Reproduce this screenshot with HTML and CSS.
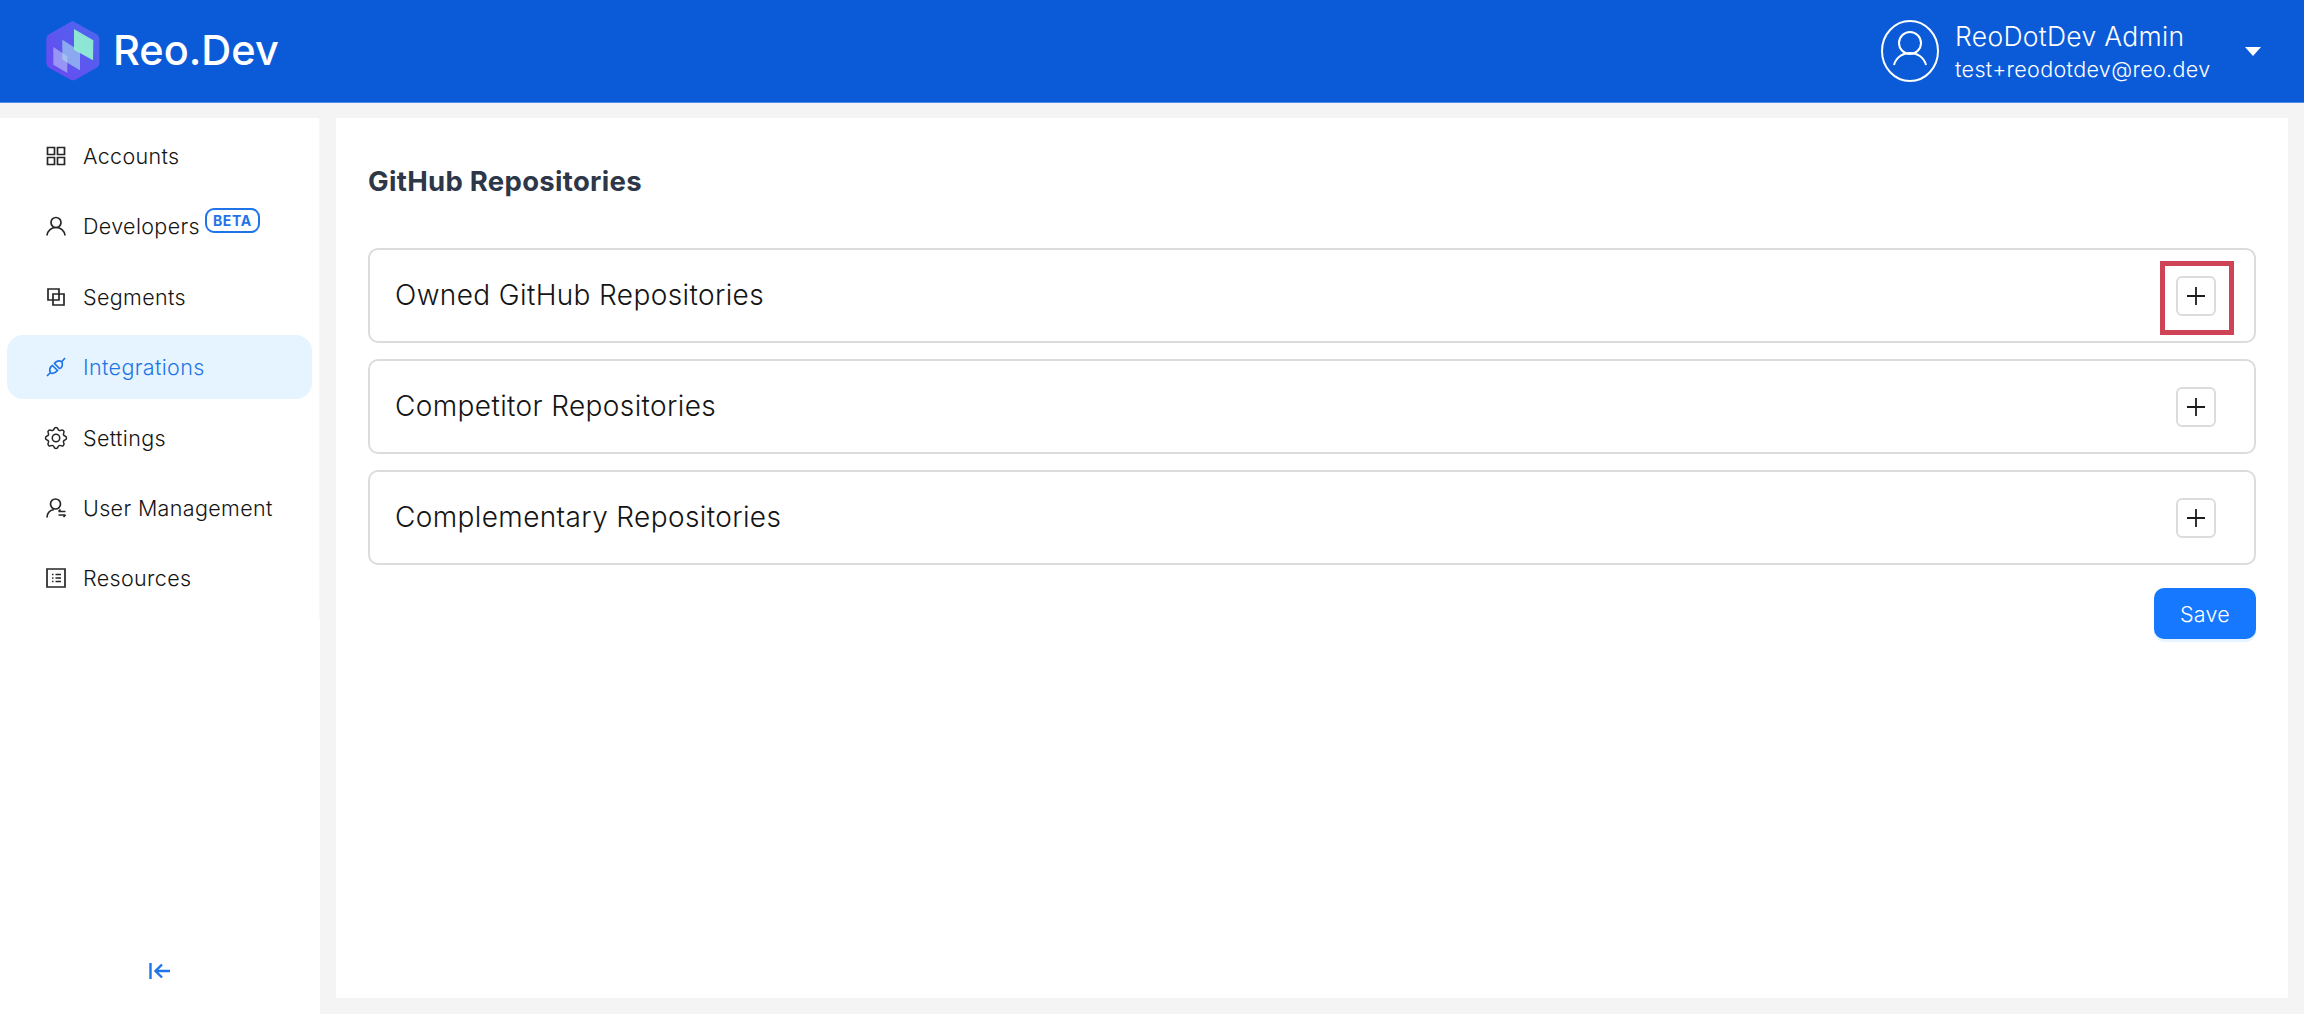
FILE: index.html
```html
<!DOCTYPE html>
<html lang="en">
<head>
<meta charset="utf-8">
<title>Reo.Dev - GitHub Repositories</title>
<link rel="stylesheet" href="styles.css">
</head>
<body>
<header class="topbar">
  <div class="brand">
    <svg class="brand-mark" viewBox="48 34 162 180" aria-hidden="true">
      <defs>
        <linearGradient id="hexfill" x1="0" y1="1" x2="1" y2="0">
          <stop offset="0" stop-color="#6c48f0"/>
          <stop offset="1" stop-color="#4a68ef"/>
        </linearGradient>
      </defs>
      <path d="M129 35 L200 74 Q208 79 208 88 L208 160 Q208 170 200 174 L136 210 Q129 214 122 210 L57 174 Q49 170 49 160 L49 88 Q49 79 57 74 L122 37 Q126 34 129 35Z" fill="url(#hexfill)"/>
      <path d="M70 112 L112 140 L112 190 L70 165Z" fill="#c4cdf8" opacity=".55"/>
      <path d="M97 90 L150 124 L150 182 L97 150Z" fill="#a9dcf0" opacity=".62"/>
      <path d="M132 58 L190 92 L189 152 L132 120Z" fill="#93f2d2" opacity=".92"/>
    </svg>
    <span class="brand-name">Reo.Dev</span>
  </div>
  <div class="account">
    <svg class="account-avatar" viewBox="0 0 58 62" aria-hidden="true">
      <ellipse cx="29" cy="31" rx="28" ry="30"/>
      <circle cx="29" cy="23" r="11"/>
      <path d="M13 45c2-8 9-12 16-12s14 4 16 12"/>
    </svg>
    <div class="account-text">
      <div class="account-name">ReoDotDev Admin</div>
      <div class="account-mail">test+reodotdev@reo.dev</div>
    </div>
    <span class="caret"></span>
  </div>
</header>

<div class="shell">
  <aside class="sidebar">
    <nav class="nav">
      <a class="nav-item">
        <svg class="nav-icon" viewBox="0 0 20 20"><path d="M1.5 1.5h7v7h-7zM11.500 1.500h7v7h-7zM1.500 11.500h7v7h-7zM11.500 11.500h7v7h-7z"/></svg>
        <span>Accounts</span>
      </a>
      <a class="nav-item">
        <svg class="nav-icon" viewBox="0 0 20 20"><circle cx="10" cy="6.500" r="5"/><path d="M1 19.500c.5-5 4.500-8 9-8s8.500 3 9 8"/></svg>
        <span>Developers</span>
        <span class="beta">BETA</span>
      </a>
      <a class="nav-item">
        <svg class="nav-icon" viewBox="0 0 20 20"><path d="M2 2h11v11H2z"/><path d="M7 7h11v11H7z"/></svg>
        <span>Segments</span>
      </a>
      <a class="nav-item nav-item-active">
        <svg class="nav-icon" viewBox="0 0 20 20"><path d="M8.500 6.500L13.500 11.500C16 11 17 8 16 5C13 3 10 4 8.500 6.500Z"/><path d="M6.500 8.500L11.500 13.500C9.500 16 7 16.800 4.500 16C3.200 13 4 10 6.500 8.500Z"/><path d="M16 4.500l3-3.500M4 16l-3 3"/></svg>
        <span>Integrations</span>
      </a>
      <a class="nav-item">
        <svg class="nav-icon nav-icon-gear" viewBox="0 0 24 24"><path d="M10.325 4.317c.426-1.756 2.924-1.756 3.350 0a1.724 1.724 0 0 0 2.573 1.066c1.543-.940 3.310.826 2.370 2.370a1.724 1.724 0 0 0 1.065 2.572c1.756.426 1.756 2.924 0 3.350a1.724 1.724 0 0 0-1.066 2.573c.940 1.543-.826 3.310-2.370 2.370a1.724 1.724 0 0 0-2.572 1.065c-.426 1.756-2.924 1.756-3.350 0a1.724 1.724 0 0 0-2.573-1.066c-1.543.940-3.310-.826-2.370-2.370a1.724 1.724 0 0 0-1.065-2.572c-1.756-.426-1.756-2.924 0-3.350a1.724 1.724 0 0 0 1.066-2.573c-.940-1.543.826-3.310 2.370-2.370 1 .608 2.296.070 2.572-1.065z"/><circle cx="12" cy="12" r="3.200"/></svg>
        <span>Settings</span>
      </a>
      <a class="nav-item">
        <svg class="nav-icon" viewBox="0 0 20 20"><circle cx="9.500" cy="6" r="5"/><path d="M1 19.500c.3-4.500 3-7.500 7-8"/><path d="M12.500 13.500h7M12.500 17h7M12.500 13.500l2-2M19.500 17l-2 2"/></svg>
        <span>User Management</span>
      </a>
      <a class="nav-item">
        <svg class="nav-icon" viewBox="0 0 20 20"><path d="M1 1h18v18H1z"/><path d="M6 6.500h1.500M6 10h1.500M6 13.500h1.500M9.500 6.500H15M9.500 10H15M9.500 13.500H15"/></svg>
        <span>Resources</span>
      </a>
    </nav>
    <button class="collapse" type="button" aria-label="Collapse sidebar">
      <svg viewBox="0 0 22 18"><path d="M1.500 1v16M21 9H7.500M13 2.500L6.500 9l6.500 6.500"/></svg>
    </button>
  </aside>

  <main class="content">
    <h1 class="page-title">GitHub Repositories</h1>
    <section class="repo-list">
      <div class="repo-card">
        <span class="repo-title">Owned GitHub Repositories</span>
        <span class="add-wrap">
          <button class="add-btn" type="button" aria-label="Add"><svg viewBox="0 0 18 18"><path d="M9 0v18M0 9h18"/></svg></button>
          <span class="highlight"></span>
        </span>
      </div>
      <div class="repo-card">
        <span class="repo-title">Competitor Repositories</span>
        <span class="add-wrap">
          <button class="add-btn" type="button" aria-label="Add"><svg viewBox="0 0 18 18"><path d="M9 0v18M0 9h18"/></svg></button>
        </span>
      </div>
      <div class="repo-card">
        <span class="repo-title">Complementary Repositories</span>
        <span class="add-wrap">
          <button class="add-btn" type="button" aria-label="Add"><svg viewBox="0 0 18 18"><path d="M9 0v18M0 9h18"/></svg></button>
        </span>
      </div>
    </section>
    <div class="actions">
      <button class="save" type="button">Save</button>
    </div>
  </main>
</div>
</body>
</html>
```
FILE: styles.css
```css
* { box-sizing: border-box; }
html, body { height: 100%; }
body {
  margin: 0;
  height: 1014px;
  overflow: hidden;
  display: flex;
  flex-direction: column;
  background: #f4f4f4;
  color: #141414;
  font-family: Inter, "Open Sans", sans-serif;
}
.topbar {
  flex: none;
  height: 103px;
  display: flex;
  align-items: center;
  justify-content: space-between;
  padding: 0 43px 0 46px;
  background: #0b5bd9;
  border-bottom: 1px solid #4d8be6;
  color: #fff;
}
.brand { display: flex; align-items: center; gap: 13px; }
.brand-mark { width: 54px; height: 60px; display: block; }
.brand-name { font-size: 41.500px; font-weight: 500; line-height: 1; }
.account { display: flex; align-items: center; }
.account-avatar { width: 58px; height: 62px; fill: none; stroke: #fff; stroke-width: 2; margin-right: 16px; }
.account-text { width: 290px; }
.account-name { font-size: 26.500px; font-weight: 300; line-height: 36px; letter-spacing: .3px; }
.account-mail { font-size: 21.500px; font-weight: 300; line-height: 30px; letter-spacing: .35px; }
.caret {
  width: 0; height: 0;
  border-left: 8px solid transparent;
  border-right: 8px solid transparent;
  border-top: 9px solid #fff;
}
.shell { flex: 1; min-height: 0; display: flex; padding-top: 15px; }
.sidebar {
  flex: none;
  width: 320px;
  background: #fff;
  display: flex;
  flex-direction: column;
}
.nav {
  display: flex;
  flex-direction: column;
  gap: 6.400px;
  height: 500px;
  padding: 6px 7px 0 7px;
  border-right: 1px solid #f7f7f7;
}
.nav-item {
  height: 64px;
  flex: none;
  display: flex;
  align-items: center;
  gap: 17px;
  padding-left: 39px;
  border-radius: 16px;
  font-size: 21.500px;
  font-weight: 300;
  letter-spacing: .35px;
}
.nav-item-active { background: #e6f4ff; color: #1f74e8; }
.nav-icon { width: 20px; height: 20px; flex: none; fill: none; stroke: currentColor; stroke-width: 1.700; color: #262626; }
.nav-icon-gear { width: 28px; height: 28px; margin: 0 -4px; stroke-width: 1.300; }
.nav-item-active .nav-icon { color: #1f74e8; }
.beta {
  margin: -12px 0 0 -12px;
  padding: 0 6px;
  height: 25px;
  display: flex;
  align-items: center;
  border: 2px solid #1f74e8;
  border-radius: 9px;
  color: #1f74e8;
  font-size: 14px;
  font-weight: 700;
  letter-spacing: .6px;
}
.collapse {
  margin: auto auto 34px;
  padding: 0;
  border: 0;
  background: none;
  width: 22px;
  height: 18px;
  display: flex;
}
.collapse svg { width: 22px; height: 18px; fill: none; stroke: #1f74e8; stroke-width: 2.400; }
.content {
  flex: 1;
  min-width: 0;
  margin: 0 16px 16px;
  padding: 45px 32px 0;
  background: #fff;
}
.page-title {
  margin: 0 0 49px;
  font-size: 27.500px;
  line-height: 36px;
  font-weight: 700;
  color: #2d3748;
  letter-spacing: .3px;
}
.repo-list { display: flex; flex-direction: column; gap: 16px; }
.repo-card {
  height: 95px;
  display: flex;
  align-items: center;
  justify-content: space-between;
  padding: 0 38px 0 25px;
  border: 2px solid #dcdcdc;
  border-radius: 10px;
}
.repo-title { font-size: 28px; line-height: 32px; margin-top: -2px; font-weight: 300; letter-spacing: .38px; color: #141414; }
.add-wrap { position: relative; display: flex; }
.add-btn {
  width: 40px;
  height: 40px;
  padding: 0;
  display: flex;
  align-items: center;
  justify-content: center;
  background: #fff;
  border: 2px solid #dcdcdc;
  border-radius: 6px;
}
.add-btn svg { width: 18px; height: 18px; fill: none; stroke: #1c1c1c; stroke-width: 1.800; }
.highlight {
  position: absolute;
  left: -16px;
  right: -18px;
  top: -15px;
  bottom: -19px;
  border: 5px solid #cf4356;
}
.actions { display: flex; justify-content: flex-end; margin-top: 23px; }
.save {
  width: 102px;
  height: 51px;
  border: 0;
  border-radius: 10px;
  background: #1677ff;
  color: #fff;
  font-family: inherit;
  font-size: 21.500px;
  font-weight: 300;
  letter-spacing: .3px;
  box-shadow: 0 3px 0 #e6f4ff;
}
```
